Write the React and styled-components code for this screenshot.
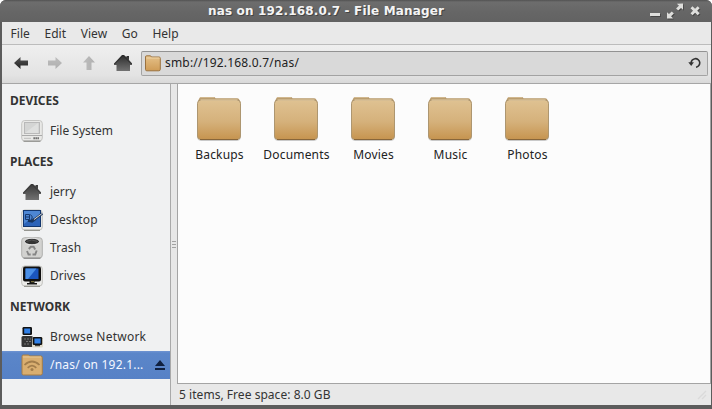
import React from "react";
import styled, { createGlobalStyle } from "styled-components";

const Global = createGlobalStyle`
  * { box-sizing: border-box; }
  html, body { margin: 0; background: #fff; }
  body { font: 12px/16px "Noto Sans", "Open Sans", sans-serif; color: #333; overflow: hidden; }
  svg { display: block; flex: none; }
`;

const Window = styled.div`
  width: 712px; height: 409px; display: flex; flex-direction: column;
  border-radius: 6px 6px 0 0; overflow: hidden;
  background: #5c5c5c;
`;
const TitleBar = styled.header`
  height: 22px; flex: none; display: flex; align-items: center; padding: 0 10px 0 208px;
  background: linear-gradient(#525252 0, #6d6d6d 2px, #666 12px, #626262 100%);
`;
const Title = styled.h1`
  flex: 1; margin: 0; font: bold 12px/20px "DejaVu Sans", sans-serif; color: #f4f4f4;
  letter-spacing: ${(p) => p.$spacing}px; white-space: nowrap; text-shadow: 1px 1px #444;
`;
const Body = styled.div`
  flex: 1; min-height: 0; margin: 0 1px 4px 2px; display: flex; flex-direction: column; background: #e8e8e8;
`;
const MenuBar = styled.nav`
  height: 23px; flex: none; display: flex; gap: 14.6px; padding: 4px 0 0 8.500px;
  border-bottom: 1px solid #bcbcbc; background: #e9e9e9;
`;
const Label = styled.span`
  display: block; white-space: nowrap; letter-spacing: ${(p) => p.$spacing || 0}px;
`;
const MenuLabel = styled(Label)`
  letter-spacing: 0.04px;
`;
const ToolBar = styled.div`
  height: 39px; flex: none; display: flex; align-items: center; padding: 0 3px 2px 11px;
  background: linear-gradient(#efefef, #e3e3e3 80%, #d9d9d9); border-bottom: 1px solid #a6a6a6;
`;
const ToolButton = styled.button`
  width: ${(p) => p.$width || 34}px; height: 34px; padding: 0; margin: 0; border: 0; background: none;
  display: flex; align-items: center; justify-content: flex-start;
`;
const Location = styled.div`
  flex: 1; height: 25px; display: flex; align-items: center; padding: 0 5px 0 2px;
  border: 1px solid #a3a3a3; border-top-color: #929292; border-radius: 2px; background: #d9d9d9; color: #222;
`;
const Path = styled.span`
  flex: 1; padding-left: 4px; letter-spacing: ${(p) => p.$spacing}px;
`;
const Main = styled.div`
  flex: 1; min-height: 0; display: flex;
`;
const Sidebar = styled.aside`
  width: 169px; flex: none; background: #f0f1f2; border-right: 1px solid #a9a9a9;
`;
const Heading = styled.h2`
  height: 33px; margin: 0; padding: 9px 0 0 8px; font: bold 12px/16px "Noto Sans", sans-serif; letter-spacing: -0.03px;
`;
const Place = styled.div`
  height: 28px; display: flex; align-items: center; gap: 7px; padding: 0 4px 0 19px;
  color: ${(p) => (p.$selected ? "#f4f7ff" : "#333")};
  background: ${(p) => (p.$selected ? "linear-gradient(#6f94d2, #5b86c9 8%, #5681c6)" : "none")};
`;
const PlaceName = styled(Label)`
  flex: 1; padding-bottom: 1px;
`;
const Splitter = styled.div`
  width: 6px; flex: none; display: flex; flex-direction: column; align-items: center; justify-content: center; gap: 2px;
  background: #e7e7e7;
`;
const Grip = styled.i`
  width: 4px; height: 1px; background: #a2a2a2;
`;
const Content = styled.section`
  flex: 1; min-width: 0; display: flex; flex-direction: column;
`;
const Files = styled.div`
  height: 300px; flex: none; display: flex; padding: 12px 0 0 3px;
  background: #fcfcfc; border: 1px solid #a4a4a4; border-top: 0;
`;
const FileItem = styled.div`
  width: 77px; display: flex; flex-direction: column; align-items: center; gap: 5px; color: #222;
`;
const FolderArt = styled.svg`
  margin-right: 1px;
`;
const StatusBar = styled.footer`
  flex: 1; display: flex; justify-content: space-between; align-items: center; padding: 0 4px 0 2px;
`;

const ArrowIcon = ({ turn = 0, off }) => (
  <svg width="16" height="16" viewBox="0 0 16 16">
    <defs>
      <linearGradient id={off ? "arOff" : "arOn"} x1="0" y1="0" x2="0" y2="1">
        <stop offset="0" stopColor={off ? "#b0b0b0" : "#555"} />
        <stop offset="1" stopColor={off ? "#bdbdbd" : "#222"} />
      </linearGradient>
    </defs>
    <path transform={`rotate(${turn} 8 8)`} d="M1 8 7.500 2v3.500H15v5H7.500V14Z" fill={off ? "url(#arOff)" : "url(#arOn)"} />
  </svg>
);

const HomeIcon = ({ width = 20, id, top = "#2b2b2b" }) => (
  <svg width={width} height="20" viewBox={`${(20 - width) / 2} 0 ${width} 20`}>
    <defs>
      <linearGradient id={id} x1="0" y1="0" x2="0" y2="1">
        <stop offset="0" stopColor={top} />
        <stop offset="1" stopColor="#727272" />
      </linearGradient>
    </defs>
    <path d="M9 2h2l2.500 2.300V3H16v4l3 3.300V12h-2v6H3.500v-6H1v-1.500Z" fill={`url(#${id})`} />
    <path d="m1.500 11 8.500-8.500 8.500 8.500" fill="none" stroke={top} />
  </svg>
);

const SmallFolder = () => (
  <svg width="17" height="17" viewBox="0 0 17 17">
    <defs>
      <linearGradient id="sf" x1="0" y1="0" x2="0" y2="1">
        <stop offset="0" stopColor="#e5c18a" />
        <stop offset="1" stopColor="#cf9c56" />
      </linearGradient>
    </defs>
    <path d="M1.500 3V2Q1.500.8 2.500.8h4l1 1.200h7.500q1.300 0 1.300 1.300v11q0 1.500-1.500 1.500h-12q-1.300 0-1.300-1.500Z" fill="url(#sf)" stroke="#9a7240" />
    <path d="M2.500 3h13" stroke="#efd3a5" />
  </svg>
);

const FolderIcon = () => (
  <FolderArt width="46" height="46" viewBox="0 0 46 46">
    <defs>
      <linearGradient id="bf" x1="0" y1="0" x2="0" y2="1">
        <stop offset="0" stopColor="#dfc292" />
        <stop offset=".55" stopColor="#d5b17b" />
        <stop offset="1" stopColor="#c6944f" />
      </linearGradient>
    </defs>
    <path d="M2 8V5l1.500-3Q4 1 5 1h12.500q1.500 0 2 1.200h21.500q1.500 0 2.200 1.300L44.500 6v2Z" fill="#b89a6c" />
    <path d="M4 1.600h14" stroke="#d4bb93" />
    <rect x="1.500" y="5" width="43" height="39.500" rx="3.500" fill="none" stroke="#c9c9c9" />
    <rect x="1.500" y="4" width="43" height="39.500" rx="3.500" fill="url(#bf)" stroke="#ad9670" />
    <path d="M4.500 4h37" stroke="#e8d0a6" />
    <path d="M4 43.500h38" stroke="#87663b" />
  </FolderArt>
);

const Plate = () => (
  <>
    <rect x=".7" y="1" width="20.600" height="20" rx="3" fill="#ececea" stroke="#c2c2be" />
    <path d="M3 21.300h16" stroke="#85857f" />
  </>
);

const DiskIcon = () => (
  <svg width="22" height="22" viewBox="0 0 22 22">
    <rect x=".7" y=".5" width="20.600" height="20.500" rx="3" fill="#e9e9e7" stroke="#c4c4c2" />
    <rect x="3.500" y="2.500" width="15" height="11" fill="#d4d5d4" stroke="#b9b9b9" />
    <path d="m4 13 13-10v10Z" fill="#dfe0df" />
    <path d="M1 15.500h20" stroke="#aaa" />
    <path d="M2.500 21.200h17" stroke="#7f7f7a" />
    <path d="M3 18.300h7" stroke="#bdbdbd" />
    <path d="M12.500 18.300h6" stroke="#555" strokeWidth="2" strokeDasharray="1.300 .7" />
  </svg>
);

const DesktopIcon = () => (
  <svg width="22" height="22" viewBox="0 0 22 22">
    <Plate />
    <rect x="2.500" y="1.500" width="17" height="16" fill="#2c63b8" stroke="#12366e" />
    <path d="M3 2h16v6Q11 8 3 15Z" fill="#4d86d3" />
    <path d="M4.500 5.500h4v5h-4zM4.500 8h4" fill="none" stroke="#17396e" />
    <path d="M9.500 5.500q3 2 1 5.500" fill="none" stroke="#17396e" />
    <path d="m7 11.500 4 1 3-2.500" stroke="#16345f" strokeWidth="2.500" fill="none" />
    <path d="m12 11.500 9.500-7" stroke="#223a5e" strokeWidth="2.400" />
    <path d="m13 10.500 8.500-6.300" stroke="#d8d8d8" />
  </svg>
);

const TrashIcon = () => (
  <svg width="22" height="22" viewBox="0 0 22 22">
    <rect x=".7" y=".7" width="20.600" height="20.300" rx="3" fill="#d2d2d0" stroke="#b0b0ae" />
    <path d="M2.500 21.200h17" stroke="#777" />
    <ellipse cx="11" cy="4.500" rx="7.500" ry="3.300" fill="#343434" stroke="#eee" />
    <path d="M5.500 4.500q5-3 11 0" stroke="#555" fill="none" />
    <g stroke="#858585" strokeWidth="1.900" fill="none">
      <path d="m7.800 12 2-2.200h2.800l1.600 2.700" />
      <path d="m15.700 13.500-1.500 4h-2.700" />
      <path d="M9.700 17.500H7.500L6 14" />
    </g>
  </svg>
);

const DrivesIcon = () => (
  <svg width="22" height="22" viewBox="0 0 22 22">
    <Plate />
    <rect x="2" y="1.500" width="18" height="15" rx="2" fill="#101010" />
    <rect x="4.500" y="3.500" width="13" height="10.500" fill="#1a55bd" />
    <path d="M4.500 3.500h11L7 14H4.500Z" fill="#4a8fe6" />
    <path d="M8.500 16h5v2h2.500v1.500H6V18h2.500Z" fill="#161616" />
    <path d="M10 16.700h3" stroke="#8d8348" />
  </svg>
);

const NetworkIcon = () => (
  <svg width="22" height="22" viewBox="0 0 22 22">
    <rect x="1.500" y="1" width="9.500" height="8" rx="1.200" fill="#111" />
    <rect x="3.200" y="2.500" width="6" height="5" fill="#3181e8" />
    <rect x=".5" y="10" width="11.500" height="11" rx="1.500" fill="#343434" />
    <path d="M3 13h7M5 15.500h6M3 18h5" stroke="#777" strokeDasharray="2 1" />
    <rect x="11" y="11" width="11" height="10.500" rx="1.500" fill="#dedac9" />
    <rect x="11.700" y="11" width="9.500" height="8" rx="1.200" fill="#111" />
    <rect x="13.400" y="12.500" width="6.200" height="5" fill="#3181e8" />
    <path d="M14 19.700h5" stroke="#222" />
  </svg>
);

const ShareIcon = () => (
  <svg width="22" height="22" viewBox="0 0 22 22">
    <path d="M1 2.500Q1 1 2.200 1h5.500l1 1H20q1.300 0 1.300 1.500v16q0 1.500-1.500 1.500H2.500Q1 21 1 19.500Z" fill="#d9ae70" stroke="#a67c45" />
    <path d="M2 3h18" stroke="#e6c896" />
    <g fill="none" stroke="#a27d4b" strokeWidth="1.700">
      <path d="M3.500 11q7.500-7 15 0" />
      <path d="M6.700 13.800q4.300-4.500 8.600 0" />
    </g>
    <circle cx="11" cy="15.500" r="1.500" fill="#a27d4b" />
  </svg>
);

const EjectIcon = () => (
  <svg width="12" height="12" viewBox="0 0 12 12">
    <path d="M6 1 11 7H1ZM1 9h10v2H1Z" fill="#10203f" />
  </svg>
);

const ReloadIcon = () => (
  <svg width="14" height="14" viewBox="0 0 14 14">
    <path d="M3.200 7.500A4.300 4.300 0 1 1 8 11.200" fill="none" stroke="#333" strokeWidth="1.600" />
    <path d="M.3 6.300h5.600L3.200 10Z" fill="#333" />
  </svg>
);

const WindowGlyphs = () => (
  <>
    <path d="M2 12h10v3H2Z" />
    <path d="M35 2.500v6.300l-2-1.900-2.800 2.700-2.100-2.100 2.800-2.700-2-2Z" />
    <path d="M19 17.500v-6.300l2 1.900 2.800-2.700 2.100 2.100-2.800 2.700 2 2.300Z" />
    <path d="m42.500 7.300 2-2 2.600 2.500 2.600-2.500 2 2-2.500 2.500 2.500 2.500-2 2-2.600-2.500-2.600 2.500-2-2L45 9.800Z" />
  </>
);

const WindowControls = () => (
  <svg width="54" height="20" viewBox="0 0 54 20">
    <g fill="#454545" transform="translate(.8 1)"><WindowGlyphs /></g>
    <g fill="#dededc"><WindowGlyphs /></g>
  </svg>
);

const ResizeGrip = () => (
  <svg width="10" height="10" viewBox="0 0 10 10">
    <path d="M1 9 9 1M5 9l4-4" stroke="#dadada" strokeWidth="1.300" />
  </svg>
);

const menus = ["File", "Edit", "View", "Go", "Help"];
const groups = [
  { title: "DEVICES", items: [{ name: "File System", icon: <DiskIcon /> }] },
  {
    title: "PLACES",
    items: [
      { name: "jerry", icon: <HomeIcon width={22} id="homeSide" top="#383838" /> },
      { name: "Desktop", icon: <DesktopIcon />, spacing: 0.15 },
      { name: "Trash", icon: <TrashIcon />, spacing: 0.1 },
      { name: "Drives", icon: <DrivesIcon /> },
    ],
  },
  {
    title: "NETWORK",
    items: [
      { name: "Browse Network", icon: <NetworkIcon />, spacing: 0.24 },
      { name: "/nas/ on 192.1...", icon: <ShareIcon />, spacing: 0.2, selected: true },
    ],
  },
];
const folders = ["Backups", "Documents", "Movies", "Music", "Photos"];

export default function App() {
  return (
    <>
      <Global />
      <Window>
        <TitleBar>
          <Title $spacing={0.16}>nas on 192.168.0.7 - File Manager</Title>
          <WindowControls />
        </TitleBar>
        <Body>
          <MenuBar>
            {menus.map((m) => <MenuLabel key={m}>{m}</MenuLabel>)}
          </MenuBar>
          <ToolBar>
            <ToolButton><ArrowIcon /></ToolButton>
            <ToolButton><ArrowIcon turn={180} off /></ToolButton>
            <ToolButton $width={32}><ArrowIcon turn={90} off /></ToolButton>
            <ToolButton $width={28}><HomeIcon id="homeBar" /></ToolButton>
            <Location>
              <SmallFolder />
              <Path $spacing={0.19}>smb://192.168.0.7/nas/</Path>
              <ReloadIcon />
            </Location>
          </ToolBar>
          <Main>
            <Sidebar>
              {groups.map((g) => (
                <React.Fragment key={g.title}>
                  <Heading>{g.title}</Heading>
                  {g.items.map(({ name, icon, spacing, selected }) => (
                    <Place key={name} $selected={selected}>
                      {icon}
                      <PlaceName $spacing={spacing}>{name}</PlaceName>
                      {selected && <EjectIcon />}
                    </Place>
                  ))}
                </React.Fragment>
              ))}
            </Sidebar>
            <Splitter><Grip /><Grip /><Grip /></Splitter>
            <Content>
              <Files>
                {folders.map((f) => (
                  <FileItem key={f}>
                    <FolderIcon />
                    <Label $spacing={0.18}>{f}</Label>
                  </FileItem>
                ))}
              </Files>
              <StatusBar>
                <Label $spacing={0.04}>5 items, Free space: 8.0 GB</Label>
                <ResizeGrip />
              </StatusBar>
            </Content>
          </Main>
        </Body>
      </Window>
    </>
  );
}
